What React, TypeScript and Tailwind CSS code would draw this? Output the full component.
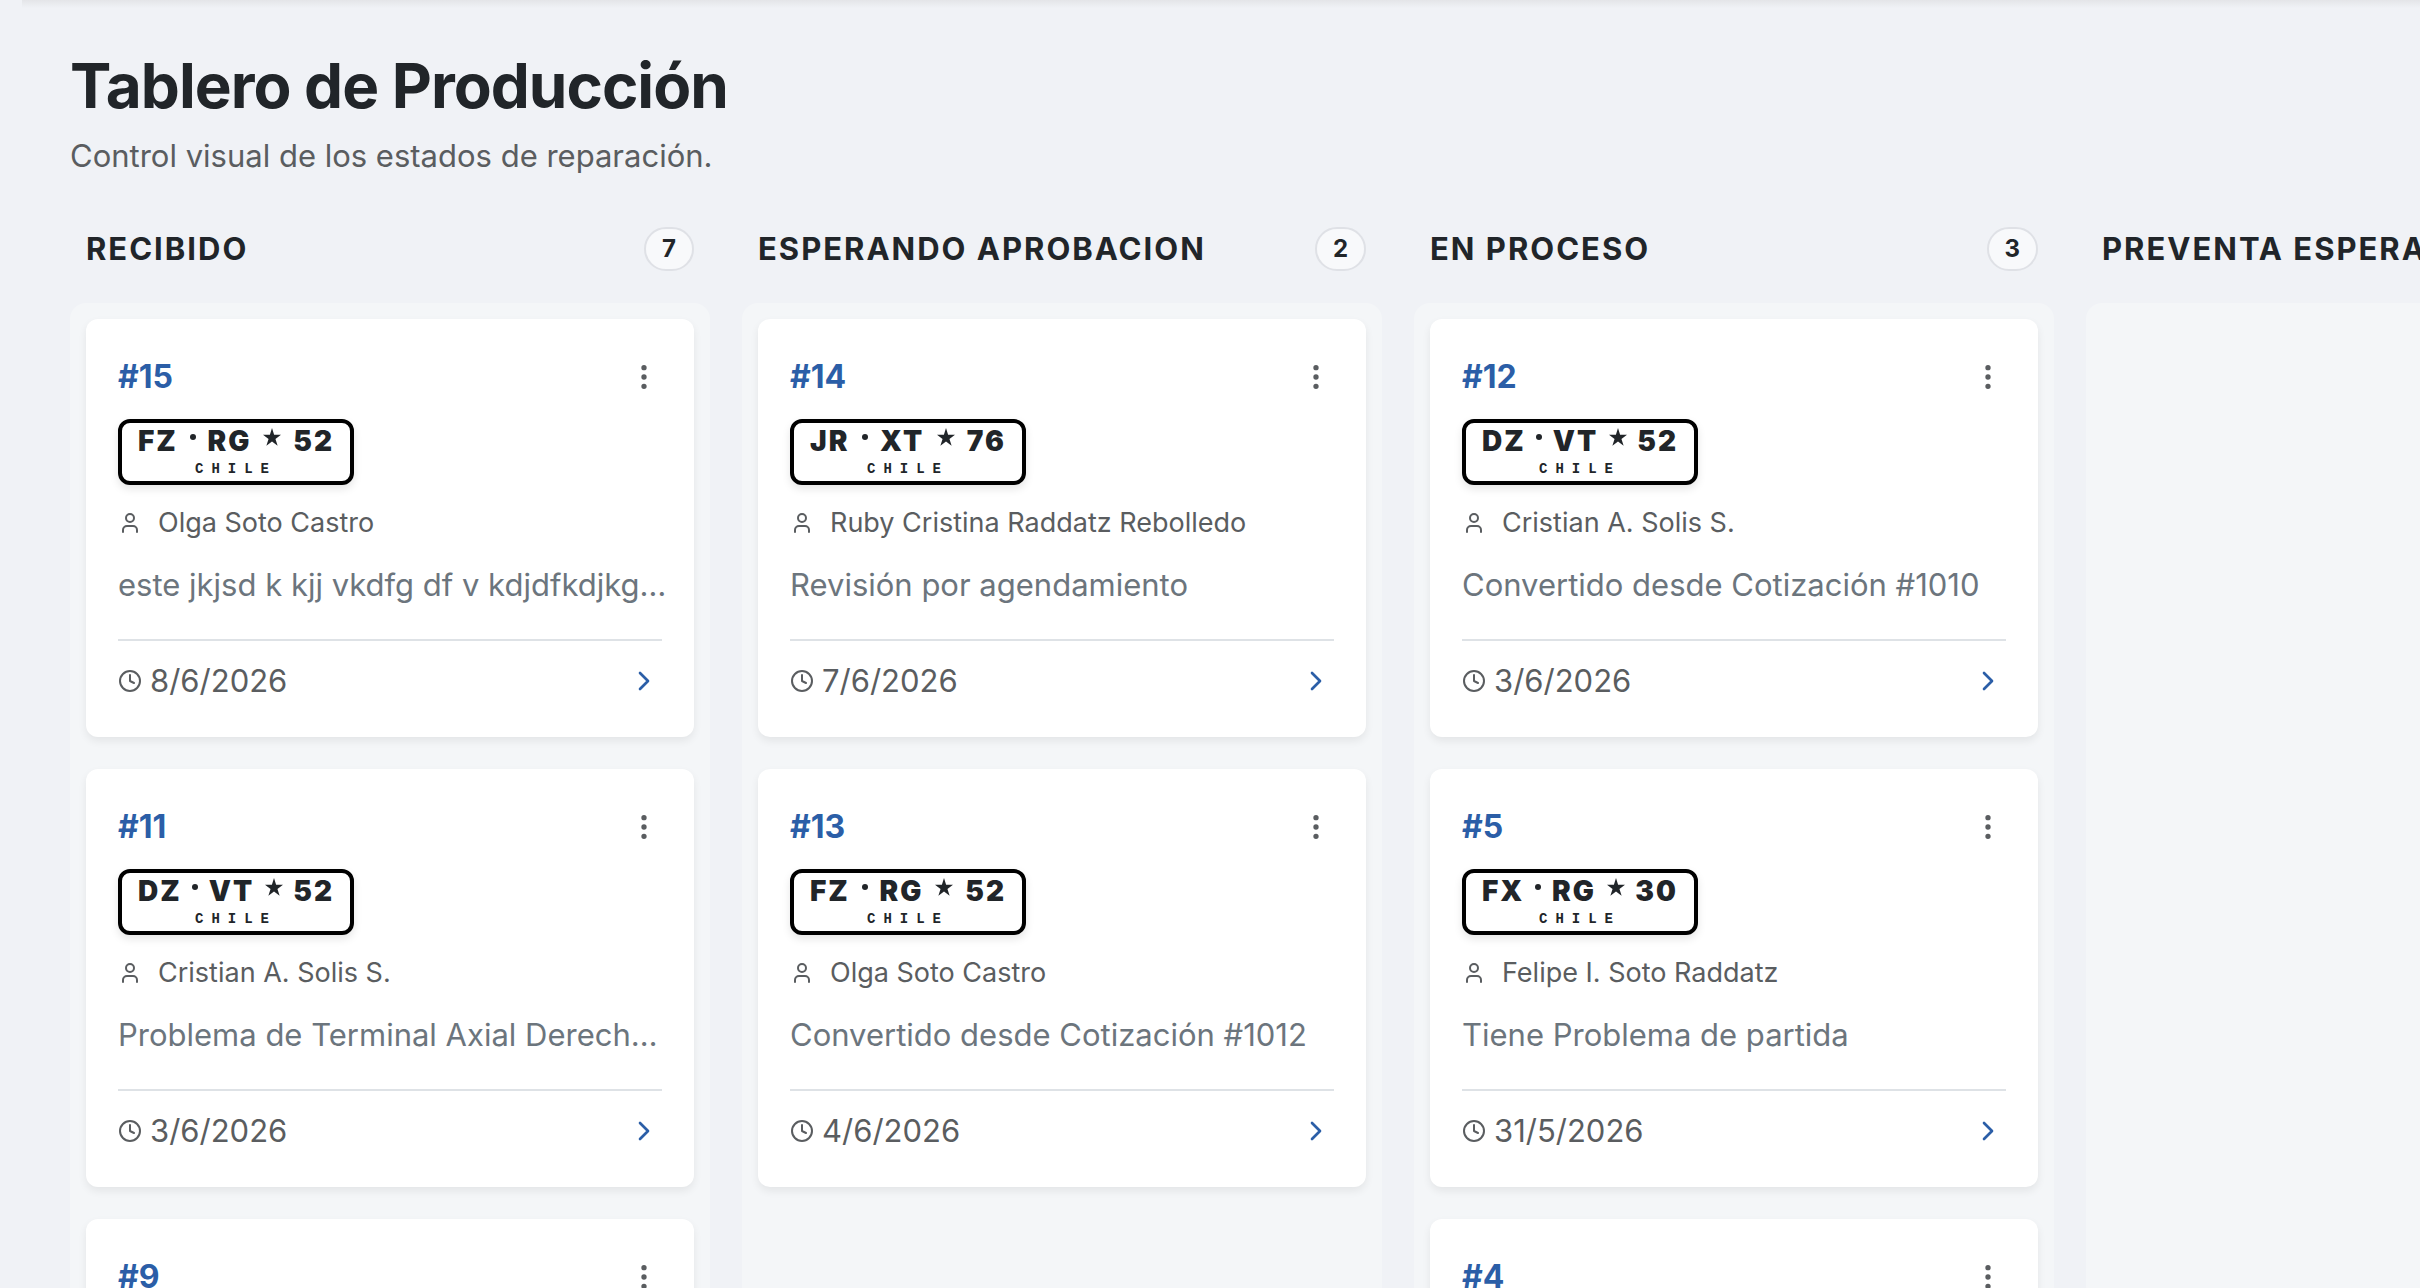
import { ChevronRight, Clock, EllipsisVertical, User } from 'lucide-react';

interface Order {
  id: number;
  plate: [string, string, string];
  client: string;
  detail: string;
  date: string;
}

interface Column {
  title: string;
  count: number;
  orders: Order[];
}

const COLUMNS: Column[] = [
  {
    title: 'RECIBIDO',
    count: 7,
    orders: [
      { id: 15, plate: ['FZ', 'RG', '52'], client: 'Olga Soto Castro', detail: 'este jkjsd k kjj vkdfg df v kdjdfkdjkg…', date: '8/6/2026' },
      { id: 11, plate: ['DZ', 'VT', '52'], client: 'Cristian A. Solis S.', detail: 'Problema de Terminal Axial Derech…', date: '3/6/2026' },
      { id: 9, plate: ['FX', 'RG', '30'], client: 'Felipe I. Soto Raddatz', detail: 'Revisión por agendamiento', date: '2/6/2026' },
    ],
  },
  {
    title: 'ESPERANDO APROBACION',
    count: 2,
    orders: [
      { id: 14, plate: ['JR', 'XT', '76'], client: 'Ruby Cristina Raddatz Rebolledo', detail: 'Revisión por agendamiento', date: '7/6/2026' },
      { id: 13, plate: ['FZ', 'RG', '52'], client: 'Olga Soto Castro', detail: 'Convertido desde Cotización #1012', date: '4/6/2026' },
    ],
  },
  {
    title: 'EN PROCESO',
    count: 3,
    orders: [
      { id: 12, plate: ['DZ', 'VT', '52'], client: 'Cristian A. Solis S.', detail: 'Convertido desde Cotización #1010', date: '3/6/2026' },
      { id: 5, plate: ['FX', 'RG', '30'], client: 'Felipe I. Soto Raddatz', detail: 'Tiene Problema de partida', date: '31/5/2026' },
      { id: 4, plate: ['JR', 'XT', '76'], client: 'Olga Soto Castro', detail: 'Revisión por agendamiento', date: '30/5/2026' },
    ],
  },
  { title: 'PREVENTA ESPERANDO', count: 0, orders: [] },
];

function Plate({ parts }: { parts: Order['plate'] }) {
  const [first, second, number] = parts;
  return (
    <div className="h-[66px] w-[236px] rounded-xl border-4 border-black bg-white px-4 shadow-[0_4px_8px_rgba(0,0,0,0.1)]">
      <div className="flex items-center justify-between text-[28px] leading-9 font-black tracking-[2px] text-[#212529]">
        <span>{first}</span>
        <span className="mb-2 size-1.5 rounded-full bg-[#212529]" />
        <span>{second}</span>
        <svg viewBox="0 0 24 24" className="mb-2 size-[18px] fill-[#212529]" aria-hidden="true">
          <path d="M12 0l2.8 9h9.2l-7.4 5.5 2.9 9.3L12 18l-7.500 5.800 2.900-9.300L0 9h9.200z" />
        </svg>
        <span>{number}</span>
      </div>
      <div className="text-center font-['Liberation_Mono',monospace] text-[14px] leading-5 font-bold tracking-[8px] text-[#212529]">CHILE</div>
    </div>
  );
}

function OrderCard({ order }: { order: Order }) {
  return (
    <article className="rounded-xl bg-white p-8 shadow-[0_4px_8px_rgba(0,0,0,0.07)]">
      <div className="flex items-center justify-between">
        <a href={`#orden-${order.id}`} className="text-[32px] leading-[52px] font-bold text-[#2b5ea7]">
          #{order.id}
        </a>
        <button type="button" aria-label={`Opciones de la orden ${order.id}`} className="mr-0.5 text-[#5a5d60]">
          <EllipsisVertical className="size-8" />
        </button>
      </div>

      <div className="mt-4">
        <Plate parts={order.plate} />
      </div>

      <div className="mt-4 flex items-center gap-4 text-[27px] leading-11 text-[#5a5d60]">
        <User className="size-6" />
        <span>{order.client}</span>
      </div>

      <p className="mt-4 text-[31px] leading-12 whitespace-nowrap text-[#6c757d]">{order.detail}</p>

      <div className="mt-[30px] flex items-center justify-between border-t-2 border-[#dee2e6] pt-4">
        <div className="flex items-center gap-2 text-[31px] leading-12 text-[#5a5d60]">
          <Clock className="size-6" />
          <time>{order.date}</time>
        </div>
        <button type="button" aria-label={`Avanzar la orden ${order.id}`} className="mr-0.5 text-[#2b5ea7]">
          <ChevronRight className="size-8" />
        </button>
      </div>
    </article>
  );
}

function BoardColumn({ column }: { column: Column }) {
  return (
    <section className="flex w-[640px] shrink-0 flex-col">
      <header className="mb-8 flex h-[45px] items-center justify-between px-4">
        <h2 className="text-[31px] leading-10 font-bold tracking-[2px] whitespace-nowrap text-[#212529]">{column.title}</h2>
        <span className="rounded-full border-2 border-[#dfe1e6] bg-[#f8f9fb] px-4 text-[24px] leading-10 font-bold text-[#212529]">
          {column.count}
        </span>
      </header>
      <div className="flex flex-1 flex-col gap-8 rounded-2xl bg-[#f4f6f8] p-4">
        {column.orders.map((order) => (
          <OrderCard key={order.id} order={order} />
        ))}
      </div>
    </section>
  );
}

export default function App() {
  return (
    <main className="h-screen overflow-hidden bg-[#f0f2f6] font-['Inter',sans-serif]">
      <div className="ml-[22px] h-2 bg-gradient-to-b from-[#e4e5e8] to-[#f0f2f6]" />
      <div className="px-[70px] pt-10">
        <h1 className="text-[62px] leading-[76px] font-bold tracking-[-1px] text-[#212529]">Tablero de Producción</h1>
        <p className="mt-2 text-[31px] leading-12 text-[#5a5d60]">Control visual de los estados de reparación.</p>
        <div className="mt-[46px] flex gap-8">
          {COLUMNS.map((column) => (
            <BoardColumn key={column.title} column={column} />
          ))}
        </div>
      </div>
    </main>
  );
}
